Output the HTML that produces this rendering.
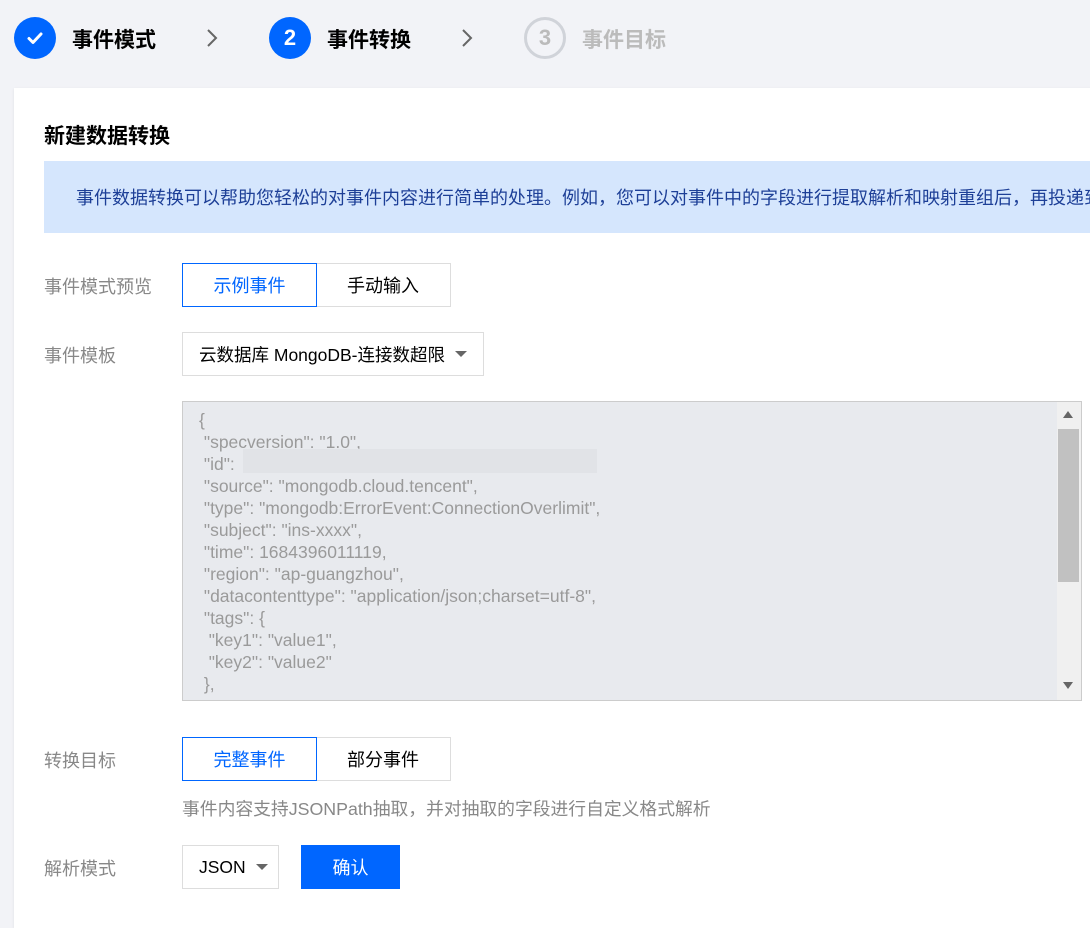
<!DOCTYPE html>
<html><head><meta charset="utf-8"><style>
*{box-sizing:border-box;margin:0;padding:0}
body{width:1090px;height:915px;overflow:hidden;background:#f2f3f7;font-family:"Liberation Sans","Noto Sans CJK SC",sans-serif;position:relative;color:#000}
.a{position:absolute}
.circ{width:42px;height:42px;border-radius:50%;display:flex;align-items:center;justify-content:center;font-size:22px;font-weight:bold}
.st{font-size:21px;font-weight:bold;top:24px}
.card{left:14px;top:88px;width:1100px;height:840px;background:#fff;box-shadow:0 1px 3px rgba(0,0,0,.08)}
.lbl{color:#888;font-size:18px;left:44px}
.seg{height:44px;border:1px solid #ddd;display:flex;align-items:center;justify-content:center;font-size:18px;background:#fff}
.on{border-color:#0066ff;color:#0066ff;z-index:2}
pre{font-family:"Liberation Sans",sans-serif;font-size:17.5px;line-height:22px;color:#9a9a9a}
</style></head><body>
<div class="a circ" style="left:14px;top:17px;background:#0066ff"><svg width="22" height="22" viewBox="0 0 22 22"><path d="M5 11.5l4 4 8-8.5" stroke="#fff" stroke-width="3" fill="none" stroke-linecap="round" stroke-linejoin="round"/></svg></div>
<div class="a st" style="left:72px">事件模式</div>
<svg class="a" style="left:205px;top:28px" width="14" height="20"><path d="M3 2l8 8-8 8" stroke="#666" stroke-width="2" fill="none"/></svg>
<div class="a circ" style="left:269px;top:17px;background:#0066ff;color:#fff">2</div>
<div class="a st" style="left:327px">事件转换</div>
<svg class="a" style="left:460px;top:28px" width="14" height="20"><path d="M3 2l8 8-8 8" stroke="#666" stroke-width="2" fill="none"/></svg>
<div class="a circ" style="left:524px;top:17px;border:3px solid #d0d3d9;color:#bbb">3</div>
<div class="a st" style="left:582px;color:#bbb">事件目标</div>

<div class="a card"></div>
<div class="a" style="left:44px;top:120px;font-size:21px;font-weight:bold">新建数据转换</div>
<div class="a" style="left:44px;top:161px;width:1060px;height:72px;background:#d5e6fd"></div>
<div class="a" style="left:76px;top:184px;font-size:18px;color:#1d3f97;white-space:nowrap">事件数据转换可以帮助您轻松的对事件内容进行简单的处理。例如，您可以对事件中的字段进行提取解析和映射重组后，再投递到</div>

<div class="a lbl" style="top:273px">事件模式预览</div>
<div class="a seg on" style="left:182px;top:263px;width:135px">示例事件</div>
<div class="a seg" style="left:316px;top:263px;width:135px;border-left:none">手动输入</div>

<div class="a lbl" style="top:342px">事件模板</div>
<div class="a seg" style="left:182px;top:332px;width:302px;justify-content:flex-start;padding-left:16px;font-size:17.5px">云数据库 MongoDB-连接数超限<svg style="margin-left:10px" width="12" height="8"><path d="M0 1h12L6 7z" fill="#666"/></svg></div>

<div class="a" style="left:182px;top:401px;width:900px;height:300px;background:#e8eaee;border:1px solid #ccc;overflow:hidden">
<pre style="position:absolute;left:16px;top:7px">{
 "specversion": "1.0",
 "id": 
 "source": "mongodb.cloud.tencent",
 "type": "mongodb:ErrorEvent:ConnectionOverlimit",
 "subject": "ins-xxxx",
 "time": 1684396011119,
 "region": "ap-guangzhou",
 "datacontenttype": "application/json;charset=utf-8",
 "tags": {
  "key1": "value1",
  "key2": "value2"
 },
 "status": "...",</pre>
<div class="a" style="left:60px;top:47px;width:354px;height:24px;background:#e1e3e7"></div>
<div class="a" style="left:874px;top:0;width:24px;height:298px;background:#f0f0f0"></div>
<div class="a" style="left:875px;top:27px;width:21px;height:153px;background:#c1c1c1"></div>
<svg class="a" style="left:880px;top:9px" width="10" height="8"><path d="M0 7h10L5 0z" fill="#666"/></svg>
<svg class="a" style="left:880px;top:280px" width="10" height="8"><path d="M0 0h10L5 7z" fill="#666"/></svg>
</div>

<div class="a lbl" style="top:747px">转换目标</div>
<div class="a seg on" style="left:182px;top:737px;width:135px">完整事件</div>
<div class="a seg" style="left:316px;top:737px;width:135px;border-left:none">部分事件</div>
<div class="a" style="left:182px;top:795px;font-size:17.8px;color:#888;white-space:nowrap">事件内容支持JSONPath抽取，并对抽取的字段进行自定义格式解析</div>

<div class="a lbl" style="top:855px">解析模式</div>
<div class="a seg" style="left:182px;top:845px;width:97px;justify-content:flex-start;padding-left:16px;font-size:17.5px">JSON<svg style="margin-left:10px" width="12" height="8"><path d="M0 1h12L6 7z" fill="#666"/></svg></div>
<div class="a seg" style="left:301px;top:845px;width:99px;background:#0066ff;border-color:#0066ff;color:#fff">确认</div>
</body></html>
